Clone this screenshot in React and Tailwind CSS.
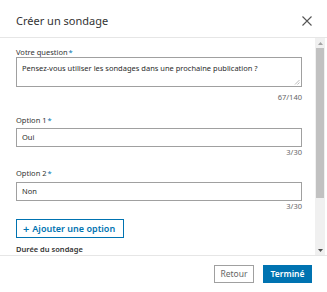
import React from "react";

function Field({ label, value, count, tall, top, boxTop }) {
  return (
    <div className={`flex flex-col ${top}`}>
      <label className="text-[7.5px] leading-[10px] text-[#333]">
        {label}
        <span className="text-[#0073b1] ml-[1px]">*</span>
      </label>
      <div
        className={`relative ${boxTop} border border-[#a0a0a0] px-[5px] text-[7.5px] text-[#2a2a2a] ${
          tall ? "h-[30px] pt-[5px] leading-[10px]" : "h-[19px] leading-[17px]"
        }`}
      >
        {value}
        {tall && (
          <svg className="absolute right-[1px] bottom-[1px]" width="6" height="6" viewBox="0 0 6 6">
            <path d="M1 5.5 L5.5 1 M3.5 5.5 L5.5 3.5" stroke="#aaa" strokeWidth="0.8" />
          </svg>
        )}
      </div>
      <div className={`${tall ? "mt-[5px]" : ""} text-right text-[7.5px] leading-[10px] text-[#666]`}>{count}</div>
    </div>
  );
}

export default function App() {
  return (
    <div
      className="w-[327px] h-[292px] bg-white flex flex-col overflow-hidden"
      style={{ fontFamily: '"Noto Sans", "Open Sans", sans-serif' }}
    >
      {/* header */}
      <div className="h-[38px] shrink-0 flex items-center justify-between pl-[16px] pr-[15px] border-b border-[#e6e6e6]">
        <h1 className="text-[11px] text-[#333] leading-none pt-[4px]">Créer un sondage</h1>
        <svg className="mt-[4px]" width="10" height="10" viewBox="0 0 10 10">
          <path d="M0.5 0.5 L9.5 9.5 M9.5 0.5 L0.5 9.5" stroke="#555" strokeWidth="1.1" />
        </svg>
      </div>

      {/* body */}
      <div className="flex h-[218px] shrink-0 border-b border-[#e6e6e6]">
        <div className="flex-1 overflow-hidden pl-[16px] pr-[13px] pt-[9px]">
          <Field
            label="Votre question"
            value="Pensez-vous utiliser les sondages dans une prochaine publication ?"
            count="67/140"
            tall
            top=""
            boxTop=""
          />
          <Field label="Option 1" value="Oui" count="3/30" top="mt-[13px]" boxTop="mt-[3px]" />
          <Field label="Option 2" value="Non" count="3/30" top="mt-[11px]" boxTop="mt-[4px]" />
          <button className="mt-[8px] h-[19px] pl-[6px] pr-[8px] border border-[#0073b1] text-[#0073b1] text-[9px] font-semibold leading-none flex items-center gap-[3px]">
            <span className="text-[11px] font-semibold leading-none -mt-[1px]">+</span>
            Ajouter une option
          </button>
          <div className="mt-[6px] text-[7.5px] font-semibold text-[#333] leading-[10px]">Durée du sondage</div>
        </div>

        {/* scrollbar */}
        <div className="w-[10px] mr-[2px] bg-[#f0f0f0] flex flex-col items-center">
          <div className="h-[10px] flex items-center justify-center">
            <svg width="5" height="3" viewBox="0 0 5 3">
              <path d="M0 3 L2.5 0 L5 3 Z" fill="#a3a3a3" />
            </svg>
          </div>
          <div className="w-[8px] h-[150px] bg-[#c1c1c1]" />
          <div className="flex-1" />
          <div className="h-[10px] flex items-center justify-center">
            <svg width="5" height="3" viewBox="0 0 5 3">
              <path d="M0 0 L5 0 L2.5 3 Z" fill="#505050" />
            </svg>
          </div>
        </div>
      </div>

      {/* footer */}
      <div className="flex-1 flex items-start justify-end gap-[9px] pr-[15px] pt-[9px]">
        <button className="w-[40px] h-[18px] border border-[#a0a0a0] text-[#666] text-[8.5px] leading-none flex items-center justify-center">
          Retour
        </button>
        <button className="w-[49px] h-[18px] bg-[#0073b1] text-white text-[8.5px] font-semibold leading-none flex items-center justify-center">
          Terminé
        </button>
      </div>
    </div>
  );
}
